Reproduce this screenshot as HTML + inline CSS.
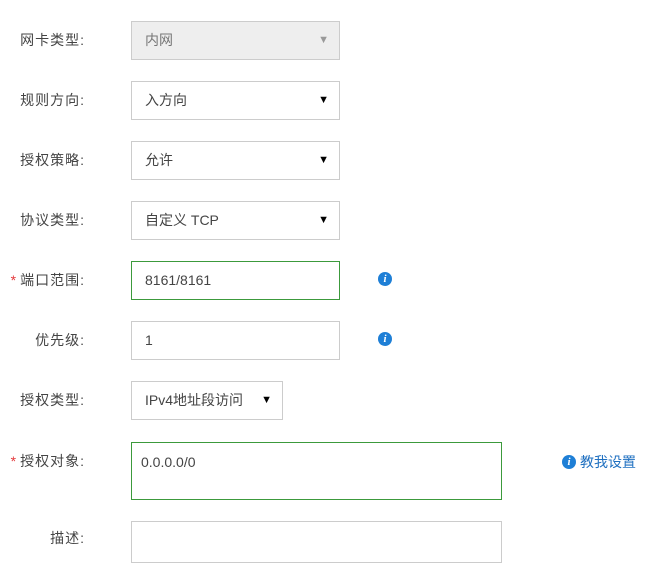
<!DOCTYPE html><html><head><style>
body{margin:0;width:651px;height:538px;background:#fff;font-family:"Liberation Sans","Noto Sans CJK SC",sans-serif;font-size:14px;color:#333;position:relative;overflow:hidden}
.l{position:absolute;right:566px;white-space:nowrap;line-height:20px;letter-spacing:1px;color:#444}
.l b{color:#e4393c;font-weight:normal;margin-right:3px}
.f{position:absolute;left:131px;width:207px;height:37px;border:1px solid #ccc;box-sizing:content-box;line-height:37px;color:#444}
.f span{position:absolute;left:13px}
.f i{position:absolute;right:10px;font-style:normal;font-size:11px;color:#000}
.ic{position:absolute;width:14px;height:14px;border-radius:50%;background:#1e7fd6;color:#fff;font:bold italic 11px/14px "Liberation Serif",serif;text-align:center}
</style></head><body>
<div class="l" style="top:30px">网卡类型:</div>
<div class="f" style="top:21px;background:#eee"><span style="color:#777">内网</span><i style="color:#999">▼</i></div>
<div class="l" style="top:90px">规则方向:</div>
<div class="f" style="top:81px"><span>入方向</span><i>▼</i></div>
<div class="l" style="top:150px">授权策略:</div>
<div class="f" style="top:141px"><span>允许</span><i>▼</i></div>
<div class="l" style="top:210px">协议类型:</div>
<div class="f" style="top:201px"><span>自定义 TCP</span><i>▼</i></div>
<div class="l" style="top:270px"><b>*</b>端口范围:</div>
<div class="f" style="top:261px;border-color:#3c9a3c"><span>8161/8161</span></div>
<div class="ic" style="left:378px;top:272px">i</div>
<div class="l" style="top:330px">优先级:</div>
<div class="f" style="top:321px"><span>1</span></div>
<div class="ic" style="left:378px;top:332px">i</div>
<div class="l" style="top:390px">授权类型:</div>
<div class="f" style="top:381px;width:150px"><span>IPv4地址段访问</span><i>▼</i></div>
<div class="l" style="top:451px"><b>*</b>授权对象:</div>
<div class="f" style="top:442px;width:369px;height:56px;line-height:38px;border-color:#3c9a3c"><span style="left:9px">0.0.0.0/0</span></div>
<div class="ic" style="left:562px;top:455px">i</div>
<div style="position:absolute;left:580px;top:452px;color:#1e6fc0;line-height:20px">教我设置</div>
<div class="l" style="top:528px">描述:</div>
<div class="f" style="top:521px;width:369px;height:40px"></div>
</body></html>
